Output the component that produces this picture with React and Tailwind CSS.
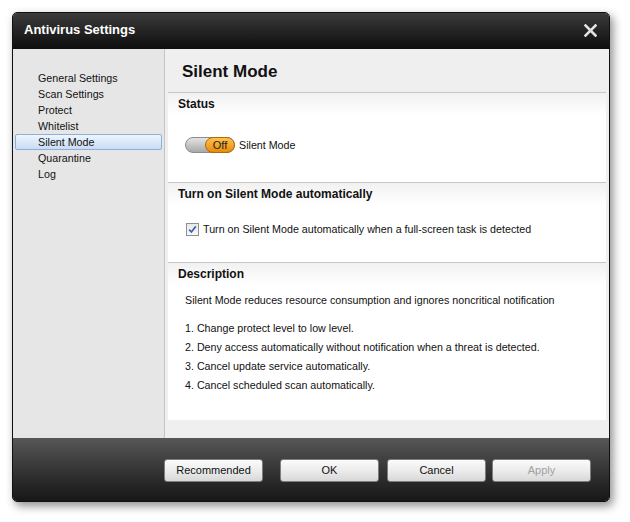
import React from 'react';

const font = { fontFamily: '"Liberation Sans", Arial, sans-serif' };

const navItems = ['General Settings', 'Scan Settings', 'Protect', 'Whitelist', 'Silent Mode', 'Quarantine', 'Log'];

function Section({ title, className, children }) {
    return (
        <div className={`border-t border-[#c6c6c6] bg-white ${className}`}>
            <div className="h-[22px] bg-gradient-to-b from-[#f1f1f1] to-white pl-[10px] pt-[4px] text-[12px] font-bold leading-[14px] text-[#111]">
                {title}
            </div>
            {children}
        </div>
    );
}

function Button({ children, disabled, className = '' }) {
    return (
        <button
            className={`h-[23px] w-[99px] rounded-[3px] border border-[#7d7d7d] bg-gradient-to-b from-[#fbfbfb] via-[#ececec] to-[#d8d8d8] text-[11px] ${disabled ? 'text-[#a0a0a0]' : 'text-[#111]'} ${className}`}
        >
            {children}
        </button>
    );
}

export default function App() {
    return (
        <div className="h-[522px] w-[630px] bg-white pl-[12px] pt-[12px]" style={font}>
            <div className="flex h-[490px] w-[598px] flex-col overflow-hidden rounded-[5px] border border-[#111] shadow-[3px_4px_10px_rgba(0,0,0,0.45)]">
                {/* Title bar */}
                <div className="flex h-[36px] items-center justify-between bg-gradient-to-b from-[#3c3c3c] to-[#0e0e0e] pb-[3px] pl-[11px] pr-[12px]">
                    <span className="text-[13px] font-bold text-white">Antivirus Settings</span>
                    <svg width="13" height="13" viewBox="0 0 13 13" className="mt-[2px]">
                        <path d="M1.5 1.5 L11.5 11.5 M11.5 1.5 L1.5 11.5" stroke="#e2e2e2" strokeWidth="2.6" strokeLinecap="square" />
                    </svg>
                </div>

                {/* Body */}
                <div className="flex h-[389px]">
                    <div className="w-[152px] border-r border-[#c4c4c4] bg-[#e6e6e6] pl-[2px] pr-[2px] pt-[21px]">
                        {navItems.map((item) => (
                            <div
                                key={item}
                                className={`h-[16px] rounded-[2px] pl-[22px] text-[10.7px] leading-[14px] text-[#111] ${
                                    item === 'Silent Mode'
                                        ? 'border border-[#8bb0dc] bg-gradient-to-b from-[#eef5fd] to-[#cadcf3]'
                                        : 'border border-transparent'
                                }`}
                            >
                                {item}
                            </div>
                        ))}
                    </div>

                    <div className="flex flex-1 flex-col bg-[#efefef] px-[3px]">
                        <div className="h-[43px] pl-[14px] pt-[13px] text-[17px] font-bold leading-[19px] text-[#111]">
                            Silent Mode
                        </div>

                        <Section title="Status" className="h-[90px]">
                            <div className="flex items-center pl-[17px] pt-[22px]">
                                <div className="relative h-[16px] w-[50px] rounded-full border border-[#8c8c8c] bg-gradient-to-b from-[#e4e4e4] to-[#a9a9a9]">
                                    <div className="absolute right-[-1px] top-[-1px] flex h-[16px] w-[30px] items-center justify-center rounded-full border border-[#b06a00] bg-gradient-to-b from-[#ffc14a] to-[#e98a00] text-[11px] text-[#222]">
                                        Off
                                    </div>
                                </div>
                                <span className="ml-[4px] text-[10.7px] text-[#111]">Silent Mode</span>
                            </div>
                        </Section>

                        <Section title="Turn on Silent Mode automatically" className="h-[80px]">
                            <div className="flex items-center pl-[18px] pt-[16px]">
                                <div className="flex h-[13px] w-[13px] items-center justify-center border border-[#8f8f8f] bg-gradient-to-b from-[#e9e9e9] to-[#f8f8f8]">
                                    <svg width="9" height="9" viewBox="0 0 9 9">
                                        <path d="M1.2 4.6 L3.4 7 L7.8 1.4" fill="none" stroke="#3a64b4" strokeWidth="1.7" />
                                    </svg>
                                </div>
                                <span className="ml-[4px] text-[10.7px] text-[#111]">
                                    Turn on Silent Mode automatically when a full-screen task is detected
                                </span>
                            </div>
                        </Section>

                        <Section title="Description" className="h-[158px]">
                            <div className="pl-[17px] pt-[6px] text-[10.7px] leading-[19px] text-[#111]">
                                <p>Silent Mode reduces resource consumption and ignores noncritical notification</p>
                                <p className="mt-[9px]">1. Change protect level to low level.</p>
                                <p>2. Deny access automatically without notification when a threat is detected.</p>
                                <p>3. Cancel update service automatically.</p>
                                <p>4. Cancel scheduled scan automatically.</p>
                            </div>
                        </Section>
                    </div>
                </div>

                {/* Footer */}
                <div className="flex flex-1 items-start bg-gradient-to-b from-[#575757] to-[#171717] pl-[151px] pt-[21px]">
                    <Button>Recommended</Button>
                    <Button className="ml-[17px]">OK</Button>
                    <Button className="ml-[8px]">Cancel</Button>
                    <Button className="ml-[6px]" disabled>Apply</Button>
                </div>
            </div>
        </div>
    );
}
